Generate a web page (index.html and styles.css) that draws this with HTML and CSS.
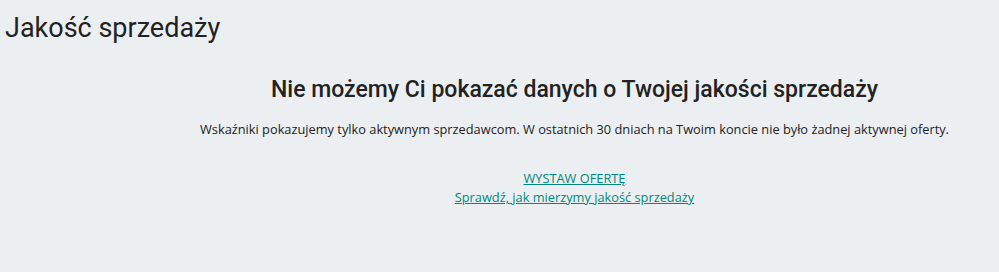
FILE: index.html
```html
<!DOCTYPE html>
<html lang="pl">
<head>
<meta charset="utf-8">
<link rel="stylesheet" href="styles.css">
</head>
<body>
<div class="page">
  <h1 class="title">Jakość sprzedaży</h1>
  <main class="content">
    <h2 class="heading">Nie możemy Ci pokazać danych o Twojej jakości sprzedaży</h2>
    <p class="desc">Wskaźniki pokazujemy tylko aktywnym sprzedawcom. W ostatnich 30 dniach na Twoim koncie nie było żadnej aktywnej oferty.</p>
    <div class="links">
      <a class="link" href="#">WYSTAW OFERTĘ</a>
      <a class="link" href="#">Sprawdź, jak mierzymy jakość sprzedaży</a>
    </div>
  </main>
</div>
</body>
</html>
```
FILE: styles.css
```css
html, body {
  margin: 0;
  padding: 0;
  background: #eceff1;
  height: 100%;
}
.page {
  padding: 11px 5px 0 5px;
  color: #222;
}
.title {
  margin: 0;
  font-family: Roboto, sans-serif;
  font-weight: 400;
  font-size: 27px;
  line-height: 34px;
  color: #222;
}
.content {
  margin-left: 150px;
  display: flex;
  flex-direction: column;
  align-items: center;
  text-align: center;
}
.heading {
  margin: 30px 0 0 0;
  font-family: Roboto, sans-serif;
  font-weight: 500;
  font-size: 23px;
  line-height: 30px;
  color: #222;
}
.desc {
  margin: 14px 0 0 0;
  font-family: "Open Sans", sans-serif;
  font-size: 12.8px;
  line-height: 20px;
  color: #222;
}
.links {
  margin-top: 30px;
  display: flex;
  flex-direction: column;
  align-items: center;
}
.link {
  font-family: "Open Sans", sans-serif;
  font-size: 12.8px;
  line-height: 19px;
  color: #00897b;
  text-decoration: underline;
}
```
